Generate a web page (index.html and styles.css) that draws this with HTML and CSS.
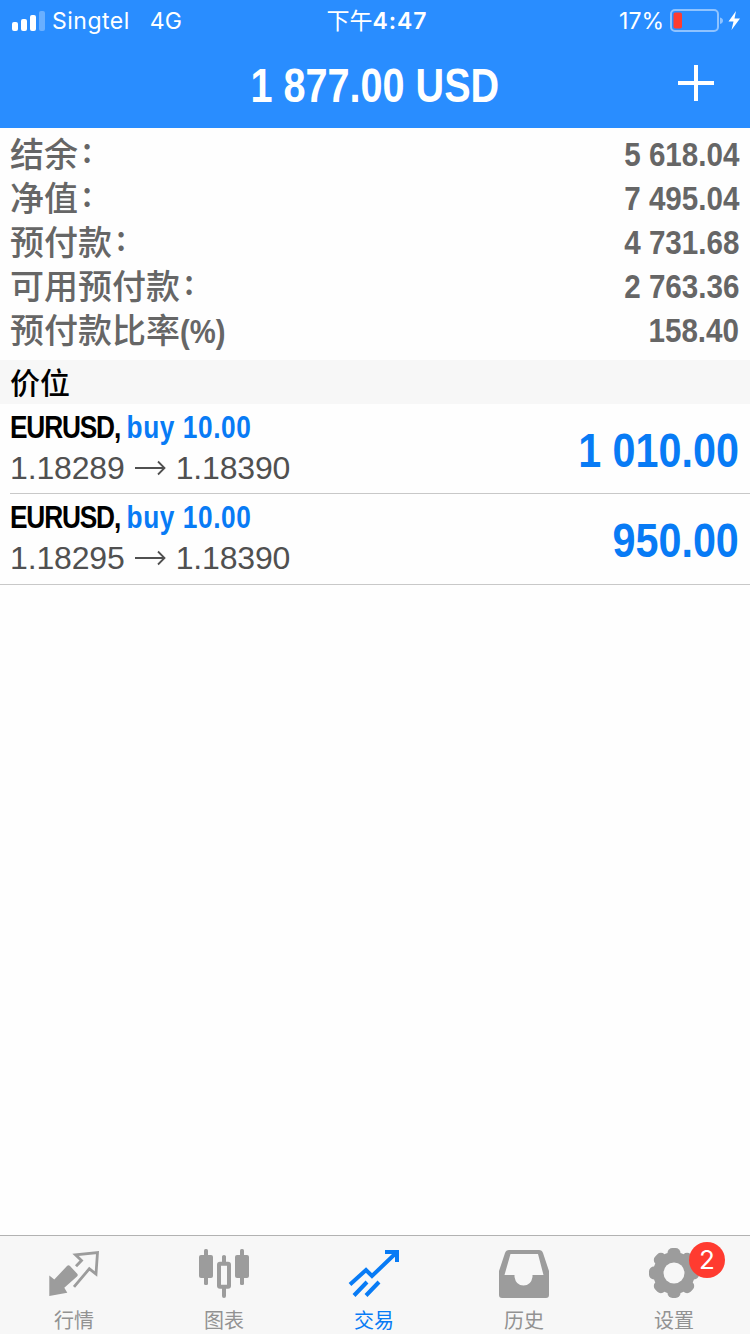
FILE: index.html
```html
<!DOCTYPE html>
<html lang="zh-CN">
<head>
    <meta charset="UTF-8">
    <meta name="viewport" content="width=device-width, initial-scale=1.0">
    <title>交易</title>
    <link rel="stylesheet" href="styles.css">
</head>
<body>
    <header class="header">
        <div class="status-bar">
            <div class="status-left">
                <svg class="signal" width="34" height="22" viewBox="0 0 34 22">
                    <rect x="0" y="13" width="6" height="9" rx="2" fill="#fff"/>
                    <rect x="9" y="10" width="6" height="12" rx="2" fill="#fff"/>
                    <rect x="18" y="6" width="6" height="16" rx="2" fill="#fff"/>
                    <rect x="27" y="2" width="6" height="20" rx="2" fill="#fff" opacity="0.3"/>
                </svg>
                <span class="carrier">Singtel</span>
                <span class="network">4G</span>
            </div>
            <div class="status-time">下午<b>4:47</b></div>
            <div class="status-right">
                <span class="percent">17%</span>
                <svg class="battery" width="72" height="24" viewBox="0 0 72 24">
                    <rect x="1" y="1" width="47" height="21" rx="4" fill="none" stroke="#8fc3ff" stroke-width="2"/>
                    <path d="M50 8.5q3 .8 3 3.2t-3 3.2z" fill="#8fc3ff"/>
                    <rect x="3.500" y="3.500" width="8.500" height="16" rx="2" fill="#ff3b30"/>
                    <path d="M66 2L58.500 12.500h5l-2 8.500L70 9.500h-5.500z" fill="#fff"/>
                </svg>
            </div>
        </div>
        <div class="title-bar">
            <h1 class="title">1 877.00 USD</h1>
            <svg class="add" width="38" height="38" viewBox="0 0 38 38">
                <path d="M19 1v36M1 19h36" stroke="#fff" stroke-width="4"/>
            </svg>
        </div>
    </header>

    <main class="content">
        <div class="summary">
            <div class="line"><span class="label">结余<i>:</i></span><span class="value">5 618.04</span></div>
            <div class="line"><span class="label">净值<i>:</i></span><span class="value">7 495.04</span></div>
            <div class="line"><span class="label">预付款<i>:</i></span><span class="value">4 731.68</span></div>
            <div class="line"><span class="label">可用预付款<i>:</i></span><span class="value">2 763.36</span></div>
            <div class="line"><span class="label">预付款比率<span class="unit">(%)</span></span><span class="value">158.40</span></div>
        </div>

        <div class="section">价位</div>

        <div class="positions">
            <div class="position">
                <div class="info">
                    <div class="symbol"><span class="pair">EURUSD,</span><span class="buy">buy 10.00</span></div>
                    <div class="prices">
                        <span>1.18289</span>
                        <svg width="31" height="18" viewBox="0 0 31 18"><path d="M0 9h29M23 2.500l6.500 6.500l-6.500 6.500" fill="none" stroke="#505050" stroke-width="1.800"/></svg>
                        <span>1.18390</span>
                    </div>
                </div>
                <div class="profit">1 010.00</div>
            </div>
            <div class="position">
                <div class="info">
                    <div class="symbol"><span class="pair">EURUSD,</span><span class="buy">buy 10.00</span></div>
                    <div class="prices">
                        <span>1.18295</span>
                        <svg width="31" height="18" viewBox="0 0 31 18"><path d="M0 9h29M23 2.500l6.500 6.500l-6.500 6.500" fill="none" stroke="#505050" stroke-width="1.800"/></svg>
                        <span>1.18390</span>
                    </div>
                </div>
                <div class="profit">950.00</div>
            </div>
        </div>
    </main>

    <nav class="tabs">
        <div class="tab">
            <svg width="52" height="52" viewBox="0 0 52 52">
                <path d="M1.300 26.500l5 4L19 17q1.500-1.500 3 0l7 7.500q1.500 1.500 0 3L16.300 38.700l3 5L1.300 47z" fill="#9c9c9c"/>
                <path d="M28 17.300l5.500-5.800-6-5.700 22-2.300-1.500 21.500-6.700-5.200-15.300 18" fill="none" stroke="#9c9c9c" stroke-width="2.800"/>
            </svg>
            <span>行情</span>
        </div>
        <div class="tab">
            <svg width="52" height="52" viewBox="0 0 52 52" fill="#9c9c9c">
                <rect x="6" y="0" width="4" height="36" rx="1.500"/>
                <rect x="1" y="6" width="14" height="23" rx="2"/>
                <rect x="42" y="0" width="4" height="36" rx="1.500"/>
                <rect x="37" y="6" width="14" height="23" rx="2"/>
                <path d="M24 7.500q0-1.500 2-1.500t2 1.500v7h-4zM24 38h4v9q0 2-2 2t-2-2z"/>
                <rect x="21" y="14.800" width="10" height="23" rx="1" fill="none" stroke="#9c9c9c" stroke-width="4"/>
            </svg>
            <span>图表</span>
        </div>
        <div class="tab active">
            <svg width="52" height="52" viewBox="0 0 52 52" fill="none" stroke="#087bf5" stroke-width="4">
                <path d="M2 35.500L18 21l6 6L48 4M37 3h12v10M6 46.500l13-13.500M18 46.500l13-13.500"/>
            </svg>
            <span>交易</span>
        </div>
        <div class="tab">
            <svg width="52" height="52" viewBox="0 0 52 52">
                <path fill="#9c9c9c" fill-rule="evenodd" d="M11 1h30q3 0 4 3l6 18v24q0 3-3 3H4q-3 0-3-3V22L7 4q1-3 4-3zM12.500 5L6.500 26H16.500v2q1.500 8.500 9 8.500t9-8.500v-2h11L40 5z"/>
            </svg>
            <span>历史</span>
        </div>
        <div class="tab">
            <svg width="52" height="52" viewBox="0 0 52 52">
                <g fill="#9c9c9c">
                    <circle cx="26" cy="24" r="21"/>
                    <rect x="19.500" y="-1" width="13" height="50" rx="5"/>
                    <rect x="19.500" y="-1" width="13" height="50" rx="5" transform="rotate(45 26 24)"/>
                    <rect x="19.500" y="-1" width="13" height="50" rx="5" transform="rotate(90 26 24)"/>
                    <rect x="19.500" y="-1" width="13" height="50" rx="5" transform="rotate(135 26 24)"/>
                </g>
                <circle cx="26" cy="24" r="10.500" fill="#f7f7f7"/>
            </svg>
            <span>设置</span>
            <div class="badge">2</div>
        </div>
    </nav>
</body>
</html>
```
FILE: styles.css
```css
* {
    box-sizing: border-box;
}

body {
    margin: 0;
    height: 1334px;
    display: flex;
    flex-direction: column;
    background-color: #fefefe;
    font-family: "Liberation Sans", "Noto Sans CJK SC", sans-serif;
    overflow: hidden;
}

svg {
    display: block;
    flex-shrink: 0;
    overflow: visible;
}

.header {
    height: 128px;
    background-color: #298dff;
    color: #fff;
}

.status-bar {
    display: grid;
    grid-template-columns: 1fr auto 1fr;
    align-items: center;
    height: 40px;
    padding: 0 8px 0 12px;
    font-family: Inter, "Noto Sans CJK SC", sans-serif;
    font-size: 23px;
    line-height: 40px;
}

.status-left, .status-right {
    display: flex;
    align-items: center;
}

.status-left span, .status-time, .percent {
    padding-top: 1px;
}

.status-right {
    justify-content: flex-end;
    gap: 6px;
}

.signal {
    margin-right: 6px;
    margin-bottom: 2px;
}

.carrier {
    letter-spacing: 0.5px;
    margin-right: 20px;
}

.status-time b {
    font-weight: 600;
    letter-spacing: 1px;
}

.title-bar {
    display: grid;
    grid-template-columns: 1fr auto 1fr;
    align-items: center;
    height: 88px;
    padding: 0 35px;
}

.title {
    grid-column: 2;
    margin: 4px 0 0;
    font-size: 48px;
    line-height: 60px;
    white-space: nowrap;
    transform: scaleX(0.825);
}

.add {
    justify-self: end;
    margin-bottom: 2px;
}

.content {
    flex: 1;
}

.summary {
    height: 232px;
    padding: 4px 11px 8px 10px;
    color: #666;
}

.line {
    display: flex;
    justify-content: space-between;
    height: 44px;
    line-height: 44px;
    font-size: 34px;
}

.label {
    margin-top: -1px;
    font-family: "Noto Sans CJK SC", sans-serif;
    font-weight: 500;
}

.label i {
    display: inline-block;
    margin-left: 4px;
    font-style: normal;
    transform: translateY(-4px);
}

.unit {
    display: inline-block;
    font-family: "Liberation Sans", sans-serif;
    font-weight: 700;
    transform: scaleX(0.86);
    transform-origin: left;
}

.value {
    font-weight: 700;
    transform: scaleX(0.87);
    transform-origin: right;
}

.section {
    height: 44px;
    padding-left: 10px;
    background-color: #f7f7f7;
    color: #000;
    font-family: "Noto Sans CJK SC", sans-serif;
    font-size: 30px;
    font-weight: 500;
    line-height: 42px;
}

.positions {
    border-bottom: 1px solid #c8c8c8;
}

.position {
    display: flex;
    justify-content: space-between;
    height: 90px;
    margin-left: 10px;
    padding-right: 11px;
}

.position:not(:last-child) {
    border-bottom: 1px solid #c8c8c8;
}

.info {
    padding-top: 3px;
}

.symbol {
    height: 41px;
    font-size: 32px;
    font-weight: 700;
    line-height: 40px;
    white-space: nowrap;
    transform: scaleX(0.82);
    transform-origin: left;
}

.pair {
    color: #000;
    letter-spacing: -1.4px;
    margin-right: 8px;
}

.buy {
    color: #087bf5;
    letter-spacing: 0.7px;
}

.prices {
    display: flex;
    align-items: center;
    gap: 10px;
    color: #505050;
    font-size: 32px;
    letter-spacing: -0.15px;
    line-height: 40px;
}

.profit {
    color: #087bf5;
    font-size: 48px;
    font-weight: 700;
    line-height: 94px;
    transform: scaleX(0.86);
    transform-origin: right;
}

.tabs {
    display: grid;
    grid-template-columns: repeat(5, 150px);
    height: 99px;
    margin-left: -1px;
    border-top: 1px solid #b2b2b2;
    background-color: #f7f7f7;
}

.tab {
    position: relative;
    display: flex;
    flex-direction: column;
    align-items: center;
    padding-top: 13px;
    color: #929292;
    font-family: "Noto Sans CJK SC", sans-serif;
    font-size: 20px;
    line-height: 30px;
}

.tab span {
    margin-top: 4px;
}

.tab.active {
    color: #087bf5;
}

.badge {
    position: absolute;
    top: 6px;
    left: 90px;
    width: 36px;
    height: 36px;
    border-radius: 50%;
    background-color: #ff3b30;
    color: #fff;
    font-family: Inter, sans-serif;
    font-size: 26px;
    line-height: 36px;
    text-align: center;
}
```
